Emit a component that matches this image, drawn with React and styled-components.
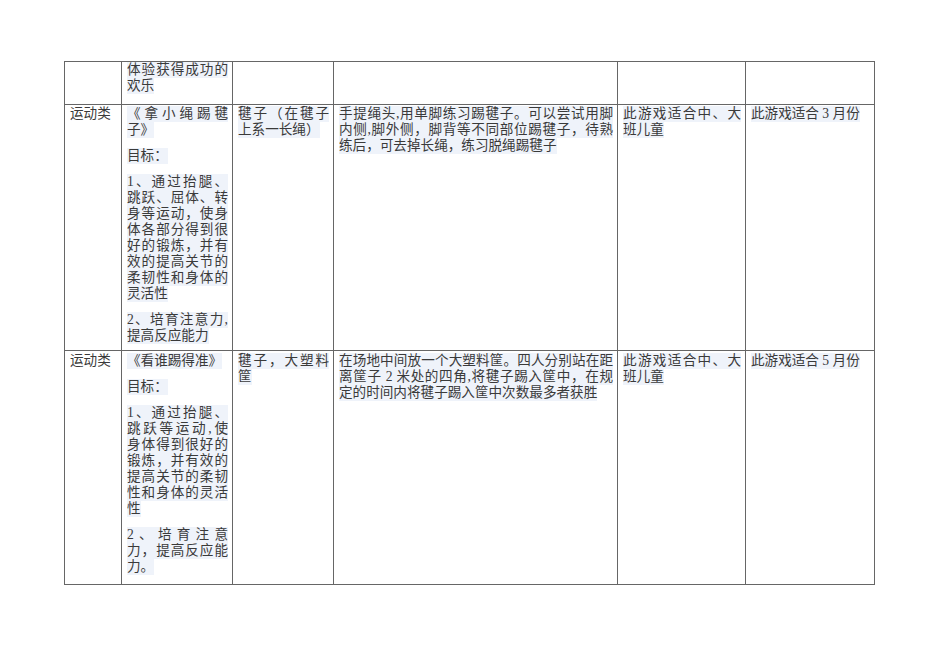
import React from 'react'
import styled, { createGlobalStyle } from 'styled-components'

const GlobalStyle = createGlobalStyle`
  html, body {
    margin: 0;
    padding: 0;
    background: #fff;
  }
  body {
    font-family: "Liberation Serif", "Noto Sans CJK SC", serif;
    color: #3a3a3a;
  }
`

const Page = styled.div`
  width: 950px;
  height: 672px;
  padding: 61px 0 0 64px;
  box-sizing: border-box;
`

const Table = styled.table`
  border-collapse: collapse;
  table-layout: fixed;
  width: 810px;
`

const Row = styled.tr`
  height: ${(p) => p.$h}px;
`

const Cell = styled.td`
  border: 1px solid #666;
  vertical-align: top;
  padding: ${(p) => p.$top}px 4px 0 5px;
  font-size: 13.6px;
  line-height: 16px;
  font-weight: 400;
`

const Para = styled.div`
  & + & {
    margin-top: 10px;
  }
`

// full lines are spread across the cell, the last line of a paragraph hugs its text
const Line = styled.div`
  display: ${(p) => (p.$fill ? 'block' : 'table')};
  text-align: justify;
  text-align-last: ${(p) => (p.$fill ? 'justify' : 'left')};
  background: ${(p) => (p.$plain ? 'transparent' : '#eff3fa')};
`

const widths = [57, 111, 101, 284, 128, 129]

const rows = [
  {
    h: 43,
    top: 0,
    cells: [[], [['体验获得成功的', '欢乐']], [], [], [], []],
  },
  {
    h: 246,
    top: 1,
    cells: [
      [['运动类']],
      [
        ['《拿小绳踢毽', '子》'],
        ['目标：'],
        [
          '1、通过抬腿、',
          '跳跃、屈体、转',
          '身等运动，使身',
          '体各部分得到很',
          '好的锻炼，并有',
          '效的提高关节的',
          '柔韧性和身体的',
          '灵活性',
        ],
        ['2、培育注意力,', '提高反应能力'],
      ],
      [['毽子（在毽子', '上系一长绳）']],
      [
        [
          '手提绳头,用单脚练习踢毽子。可以尝试用脚',
          '内侧,脚外侧，脚背等不同部位踢毽子，待熟',
          '练后，可去掉长绳，练习脱绳踢毽子',
        ],
      ],
      [['此游戏适合中、大', '班儿童']],
      [['此游戏适合 3 月份']],
    ],
  },
  {
    h: 234,
    top: 2,
    cells: [
      [['运动类']],
      [
        ['《看谁踢得准》'],
        ['目标：'],
        [
          '1、通过抬腿、',
          '跳跃等运动,使',
          '身体得到很好的',
          '锻炼，并有效的',
          '提高关节的柔韧',
          '性和身体的灵活',
          '性',
        ],
        ['2、培育注意', '力，提高反应能', '力。'],
      ],
      [['毽子，大塑料', '筐']],
      [
        [
          '在场地中间放一个大塑料筐。四人分别站在距',
          '离筐子 2 米处的四角,将毽子踢入筐中，在规',
          '定的时间内将毽子踢入筐中次数最多者获胜',
        ],
      ],
      [['此游戏适合中、大', '班儿童']],
      [['此游戏适合 5 月份']],
    ],
  },
]

const App = () => (
  <Page>
    <GlobalStyle />
    <Table>
      <colgroup>
        {widths.map((w, i) => (
          <col key={i} style={{ width: w }} />
        ))}
      </colgroup>
      <tbody>
        {rows.map((row, ri) => (
          <Row key={ri} $h={row.h}>
            {row.cells.map((paras, ci) => (
              <Cell key={ci} $top={row.top}>
                {paras.map((lines, pi) => (
                  <Para key={pi}>
                    {lines.map((text, li) => (
                      <Line key={li} $fill={li < lines.length - 1} $plain={ci === 0}>
                        {text}
                      </Line>
                    ))}
                  </Para>
                ))}
              </Cell>
            ))}
          </Row>
        ))}
      </tbody>
    </Table>
  </Page>
)

export default App
